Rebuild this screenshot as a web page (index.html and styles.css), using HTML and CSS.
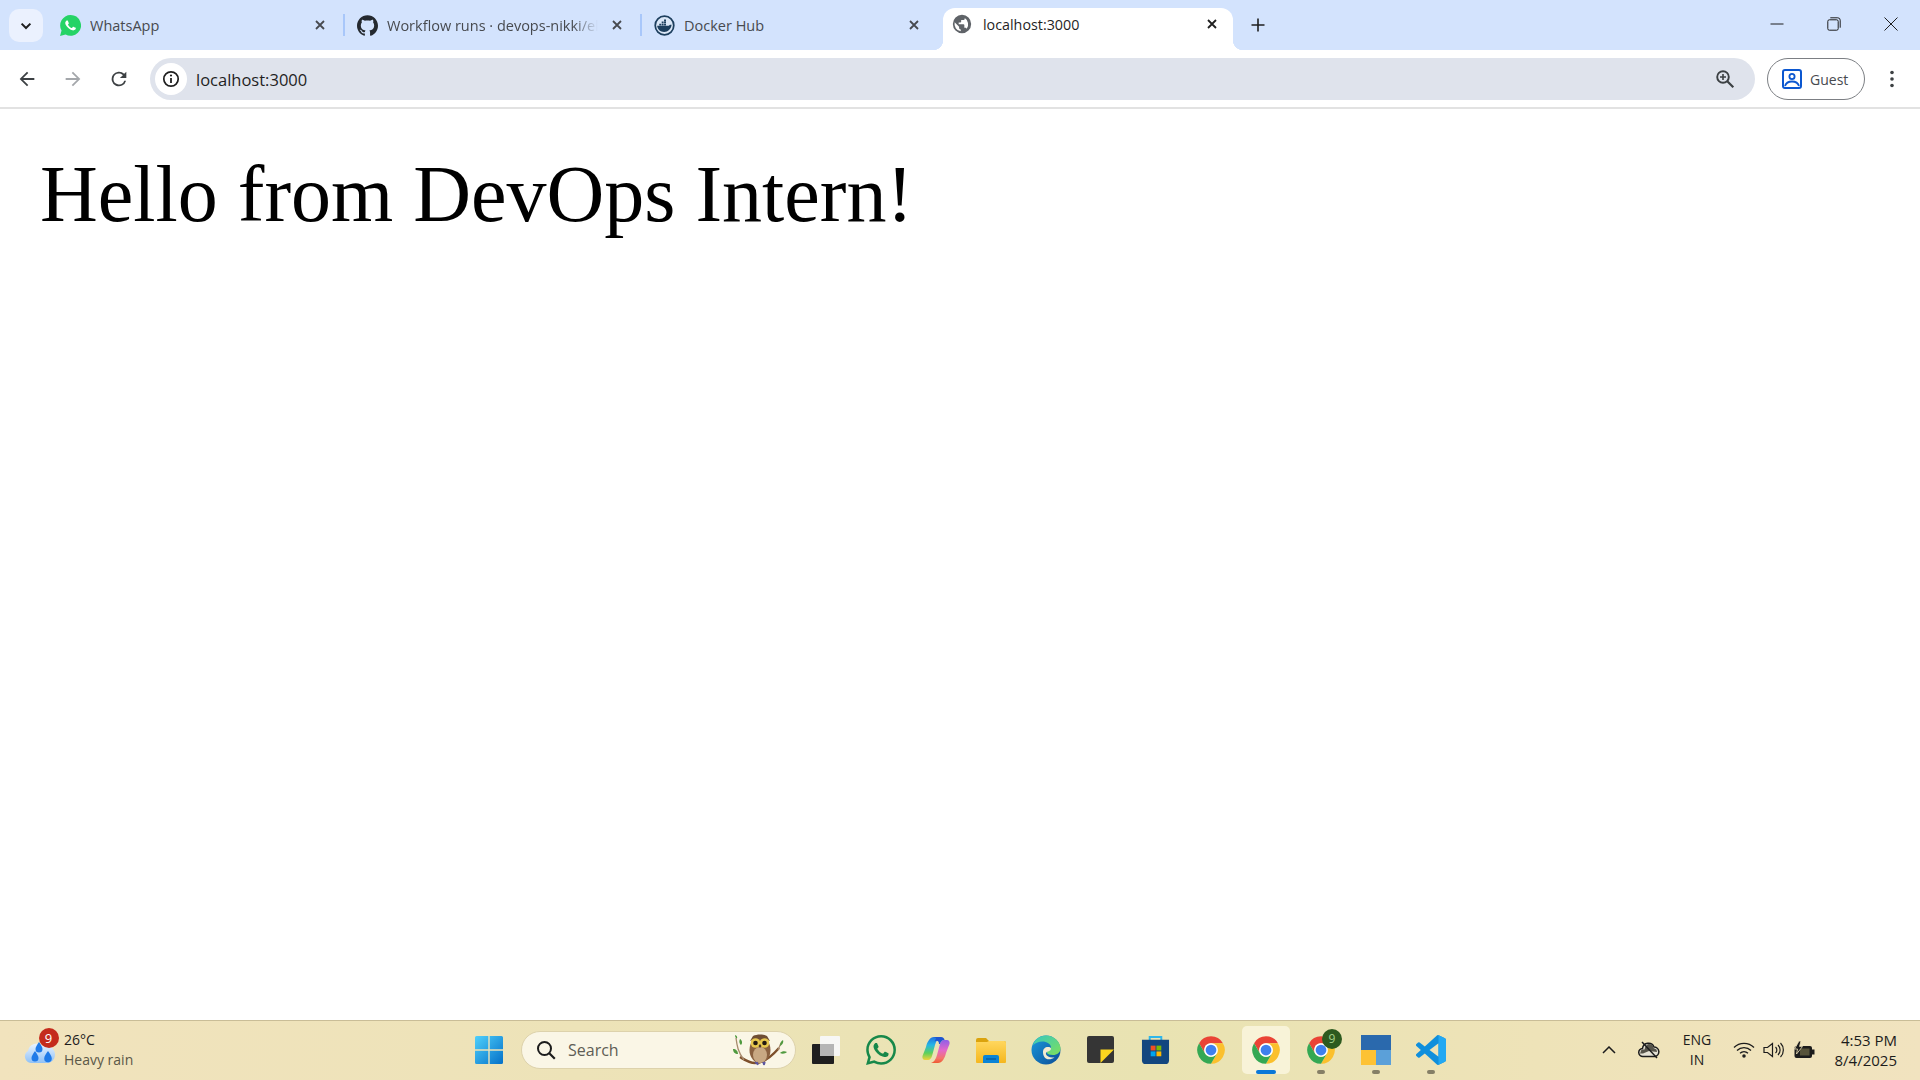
FILE: index.html
```html
<!DOCTYPE html>
<html lang="en">
<head>
<meta charset="utf-8">
<title>localhost:3000</title>
<link rel="stylesheet" href="styles.css">
</head>
<body>
<svg class="defs" width="0" height="0" aria-hidden="true">
  <defs>
    <linearGradient id="win" x1="0" y1="0" x2="1" y2="1"><stop offset="0" stop-color="#4fd0fb"/><stop offset="1" stop-color="#0470c8"/></linearGradient>
    <linearGradient id="edge1" x1="0" y1="0" x2="1" y2="1"><stop offset="0" stop-color="#36c8c0"/><stop offset="1" stop-color="#7fe05a"/></linearGradient>
    <linearGradient id="edge2" x1="0" y1="0" x2="1" y2="1"><stop offset="0" stop-color="#1a9ade"/><stop offset="1" stop-color="#0c4d96"/></linearGradient>
    <linearGradient id="fold" x1="0" y1="0" x2="0" y2="1"><stop offset="0" stop-color="#ffd75e"/><stop offset="1" stop-color="#f5b71e"/></linearGradient>
    <linearGradient id="cop" x1="0" y1="0" x2="0" y2="1"><stop offset="0" stop-color="#1f6fe0"/><stop offset=".35" stop-color="#25b6e6"/><stop offset=".7" stop-color="#5fd05a"/><stop offset="1" stop-color="#f2d23a"/></linearGradient>
    <linearGradient id="cop2" x1="0" y1="0" x2="0" y2="1"><stop offset="0" stop-color="#8f5fe8"/><stop offset=".45" stop-color="#e468c8"/><stop offset=".8" stop-color="#f4756a"/><stop offset="1" stop-color="#ef5a30"/></linearGradient>
    <linearGradient id="cloud" x1="0" y1="0" x2="0" y2="1"><stop offset="0" stop-color="#eaf3fe"/><stop offset="1" stop-color="#8fc1f6"/></linearGradient>
    <symbol id="chrome" viewBox="0 0 24 24">
      <path fill="#ea4335" d="M2.47 6.5A11 11 0 0 1 21.53 6.5H12A5.5 5.5 0 0 0 7.24 14.75Z"/>
      <path fill="#fbc02d" d="M21.53 6.5A11 11 0 0 1 12 23L16.76 14.75A5.5 5.5 0 0 0 12 6.5Z"/>
      <path fill="#34a853" d="M12 23A11 11 0 0 1 2.47 6.5L7.24 14.75A5.5 5.5 0 0 0 16.76 14.75Z"/>
      <circle cx="12" cy="12" r="5.4" fill="#fff"/>
      <circle cx="12" cy="12" r="4.3" fill="#3f80ee"/>
    </symbol>
    <symbol id="wa" viewBox="0 0 24 24">
      <path d="M17.472 14.382c-.297-.149-1.758-.867-2.03-.967-.273-.099-.471-.148-.67.15-.197.297-.767.966-.94 1.164-.173.199-.347.223-.644.075-.297-.15-1.255-.463-2.39-1.475-.883-.788-1.48-1.761-1.653-2.059-.173-.297-.018-.458.13-.606.134-.133.298-.347.446-.52.149-.174.198-.298.298-.497.099-.198.05-.371-.025-.52-.075-.149-.669-1.612-.916-2.207-.242-.579-.487-.5-.669-.51-.173-.008-.371-.01-.57-.01-.198 0-.52.074-.792.372-.272.297-1.04 1.016-1.04 2.479 0 1.462 1.065 2.875 1.213 3.074.149.198 2.096 3.2 5.077 4.487.709.306 1.262.489 1.694.625.712.227 1.36.195 1.871.118.571-.085 1.758-.719 2.006-1.413.248-.694.248-1.289.173-1.413-.074-.124-.272-.198-.57-.347m-5.421 7.403h-.004a9.87 9.87 0 01-5.031-1.378l-.361-.214-3.741.982.998-3.648-.235-.374a9.86 9.86 0 01-1.51-5.26c.001-5.45 4.436-9.884 9.888-9.884 2.64 0 5.122 1.03 6.988 2.898a9.825 9.825 0 012.893 6.994c-.003 5.45-4.437 9.884-9.885 9.884m8.413-18.297A11.815 11.815 0 0012.05 0C5.495 0 .16 5.335.157 11.892c0 2.096.547 4.142 1.588 5.945L.057 24l6.305-1.654a11.882 11.882 0 005.683 1.448h.005c6.554 0 11.89-5.335 11.893-11.893a11.821 11.821 0 00-3.48-8.413Z"/>
    </symbol>
  </defs>
</svg>

<div class="window">
  <header class="tabstrip">
    <button class="tabsearch" type="button" aria-label="Search tabs">
      <svg viewBox="0 0 12 12" width="12" height="12"><path d="M1.6 3.6 6 8l4.4-4.4" fill="none" stroke="#1f1f1f" stroke-width="2"/></svg>
    </button>
    <div class="tab">
      <svg class="favicon" viewBox="0 0 24 24">
        <path fill="#25d366" d="M.06 24l1.69-6.16A11.9 11.9 0 0 1 12.05 0a11.9 11.9 0 0 1 8.41 20.3 11.9 11.9 0 0 1-14.1 2.05Z"/>
        <path fill="#fff" d="M17.472 14.382c-.297-.149-1.758-.867-2.03-.967-.273-.099-.471-.148-.67.15-.197.297-.767.966-.94 1.164-.173.199-.347.223-.644.075-.297-.15-1.255-.463-2.39-1.475-.883-.788-1.48-1.761-1.653-2.059-.173-.297-.018-.458.13-.606.134-.133.298-.347.446-.52.149-.174.198-.298.298-.497.099-.198.05-.371-.025-.52-.075-.149-.669-1.612-.916-2.207-.242-.579-.487-.5-.669-.51-.173-.008-.371-.01-.57-.01-.198 0-.52.074-.792.372-.272.297-1.04 1.016-1.04 2.479 0 1.462 1.065 2.875 1.213 3.074.149.198 2.096 3.2 5.077 4.487.709.306 1.262.489 1.694.625.712.227 1.36.195 1.871.118.571-.085 1.758-.719 2.006-1.413.248-.694.248-1.289.173-1.413-.074-.124-.272-.198-.57-.347"/>
      </svg>
      <span class="tab-title">WhatsApp</span>
      <svg class="tab-close" viewBox="0 0 12 12"><path d="M2 2l8 8M10 2l-8 8"/></svg>
    </div>
    <span class="sep"></span>
    <div class="tab">
      <svg class="favicon" viewBox="0 0 24 24"><path fill="#24292f" d="M12 .297c-6.63 0-12 5.373-12 12 0 5.303 3.438 9.8 8.205 11.385.6.113.82-.258.82-.577 0-.285-.01-1.04-.015-2.04-3.338.724-4.042-1.61-4.042-1.61C4.422 18.07 3.633 17.7 3.633 17.7c-1.087-.744.084-.729.084-.729 1.205.084 1.838 1.236 1.838 1.236 1.07 1.835 2.809 1.49 3.495 1.14.108-.776.417-1.305.76-1.605-2.665-.3-5.466-1.332-5.466-5.93 0-1.31.465-2.38 1.235-3.22-.135-.303-.54-1.523.105-3.176 0 0 1.005-.322 3.3 1.23.96-.267 1.98-.399 3-.405 1.02.006 2.04.138 3 .405 2.28-1.552 3.285-1.23 3.285-1.23.645 1.653.24 2.873.12 3.176.765.84 1.23 1.91 1.23 3.22 0 4.61-2.805 5.625-5.475 5.92.42.36.81 1.096.81 2.22 0 1.606-.015 2.896-.015 3.286 0 .315.21.69.825.57C20.565 22.092 24 17.592 24 12.297c0-6.627-5.373-12-12-12"/></svg>
      <span class="tab-title tab-title-fade">Workflow runs · devops-nikki/el</span>
      <svg class="tab-close" viewBox="0 0 12 12"><path d="M2 2l8 8M10 2l-8 8"/></svg>
    </div>
    <span class="sep"></span>
    <div class="tab">
      <svg class="favicon" viewBox="0 0 24 24">
        <circle cx="12" cy="12" r="10.6" fill="#dbe7f7" stroke="#1d3f5e" stroke-width="2"/>
        <path fill="#1d3f5e" d="M3.6 12.4h13.3c.6-1.1 1.9-1.6 3.2-1.2-.4 4.500-4 8.300-8.500 8.300-4.300 0-7.600-3-8-7.100Z"/>
        <path fill="#1d3f5e" d="M6 10h2.200v2H6zM8.800 10H11v2H8.800zM11.500 10h2.200v2h-2.200zM8.800 7.500H11v2H8.800zM11.500 7.500h2.200v2h-2.200zM11.500 5h2.200v2h-2.200z"/>
      </svg>
      <span class="tab-title">Docker Hub</span>
      <svg class="tab-close" viewBox="0 0 12 12"><path d="M2 2l8 8M10 2l-8 8"/></svg>
    </div>
    <div class="tab tab-active">
      <svg class="favicon favicon-globe" viewBox="0 0 24 24"><path fill="#5f6368" d="M12 1a11 11 0 1 0 0 22 11 11 0 0 0 0-22Zm-1.500 19.800A9 9 0 0 1 3.200 10l5.300 5.300v1.200c0 1.100.9 2 2 2Zm7.300-2.800c-.3-.9-1.100-1.500-2-1.500h-1v-3.200c0-.6-.5-1-1-1H8v-2h2c.6 0 1-.5 1-1v-2h2.300c1.100 0 2-.9 2-2v-.4a9 9 0 0 1 2.500 12.600Z"/></svg>
      <span class="tab-title tab-title-active">localhost:3000</span>
      <svg class="tab-close tab-close-active" viewBox="0 0 12 12"><path d="M2 2l8 8M10 2l-8 8"/></svg>
    </div>
    <svg class="newtab" viewBox="0 0 14 14"><path d="M7 .5v13M.5 7h13"/></svg>
    <div class="winctl">
      <svg class="winbtn" viewBox="0 0 14 14"><path d="M.5 7h13"/></svg>
      <svg class="winbtn" viewBox="0 0 14 14"><rect x=".8" y="2.800" width="10.400" height="10.400" rx="1.500"/><path d="M3.300.8h7.500a2.400 2.400 0 0 1 2.400 2.400v7.500"/></svg>
      <svg class="winbtn" viewBox="0 0 14 14"><path d="M.5.5l13 13M13.500.5l-13 13"/></svg>
    </div>
  </header>

  <nav class="toolbar">
    <svg class="navicon" viewBox="0 0 24 24"><path fill="#3c4043" d="M20 11H7.800l5.600-5.600L12 4l-8 8 8 8 1.400-1.400L7.800 13H20z"/></svg>
    <svg class="navicon" viewBox="0 0 24 24"><path fill="#a4a7ab" d="M4 11h12.200l-5.600-5.600L12 4l8 8-8 8-1.400-1.400 5.600-5.600H4z"/></svg>
    <svg class="navicon" viewBox="0 0 24 24"><path fill="#3c4043" d="M17.650 6.350A8 8 0 1 0 19.730 14h-2.080A6 6 0 1 1 12 6c1.660 0 3.140.69 4.220 1.780L13 11h7V4z"/></svg>
    <div class="omnibox">
      <span class="infochip">
        <svg viewBox="0 0 18 18" width="18" height="18"><circle cx="9" cy="9" r="7.200" fill="none" stroke="#1f1f1f" stroke-width="1.700"/><path d="M9 8v5" stroke="#1f1f1f" stroke-width="1.800"/><circle cx="9" cy="5.500" r="1.100" fill="#1f1f1f"/></svg>
      </span>
      <span class="url">localhost:3000</span>
      <svg class="zoomicon" viewBox="0 0 20 20" width="20" height="20"><circle cx="8" cy="8" r="5.800" fill="none" stroke="#3c4043" stroke-width="1.900"/><path d="M8 5v6M5 8h6" stroke="#3c4043" stroke-width="1.600"/><path d="M12.300 12.300l6 6" stroke="#3c4043" stroke-width="2.200"/></svg>
    </div>
    <div class="guest">
      <svg viewBox="0 0 20 20" width="20" height="20"><rect x="1" y="1" width="18" height="18" rx="2" fill="none" stroke="#0b57d0" stroke-width="2"/><circle cx="10" cy="7.500" r="2.600" fill="none" stroke="#0b57d0" stroke-width="1.800"/><path d="M3 17c1-3.300 3.600-4.500 7-4.500s6 1.200 7 4.500" fill="none" stroke="#0b57d0" stroke-width="1.800"/></svg>
      <span>Guest</span>
    </div>
    <svg class="kebab" viewBox="0 0 4 18" width="4" height="18"><circle cx="2" cy="2.500" r="1.800"/><circle cx="2" cy="9" r="1.800"/><circle cx="2" cy="15.500" r="1.800"/></svg>
  </nav>

  <main class="page">
    <h1 class="hello">Hello from DevOps Intern!</h1>
  </main>

  <footer class="taskbar">
    <div class="weather">
      <div class="weather-icon">
        <svg viewBox="0 0 36 34" width="36" height="34">
          <path fill="url(#cloud)" d="M11 30A6.500 6.500 0 0 1 8 18A9 9 0 0 1 23 13A9 9 0 0 1 29 30Z"/>
          <path fill="#1f7ae8" d="M19 9c2 3 3.500 5 3.500 7a3.500 3.500 0 0 1-7 0c0-2 1.500-4 3.500-7ZM15 18c2 3 3.500 5 3.500 7a3.500 3.500 0 0 1-7 0c0-2 1.500-4 3.500-7ZM28 18c2 3 3.800 5 3.800 7.500a3.800 3.800 0 0 1-7.600 0c0-2.500 1.800-4.500 3.800-7.500Z"/>
        </svg>
        <span class="weather-badge">9</span>
      </div>
      <div class="weather-text">
        <span class="temp">26°C</span>
        <span class="cond">Heavy rain</span>
      </div>
    </div>

    <div class="slot">
      <svg viewBox="0 0 30 30" width="30" height="30"><path fill="url(#win)" d="M1 2.500A1.500 1.500 0 0 1 2.500 1h11.800v13.300H1ZM15.700 1h11.800A1.500 1.500 0 0 1 29 2.500v11.800H15.700ZM1 15.700h13.300V29H2.500A1.500 1.500 0 0 1 1 27.500ZM15.700 15.700H29v11.800a1.500 1.500 0 0 1-1.500 1.500H15.700Z"/></svg>
    </div>

    <div class="search">
      <svg viewBox="0 0 20 20" width="20" height="20"><circle cx="8.500" cy="8.500" r="6.500" fill="none" stroke="#1c1c1c" stroke-width="2"/><path d="M13.300 13.300l5.500 5.500" stroke="#1c1c1c" stroke-width="2.200"/></svg>
      <span class="search-label">Search</span>
      <svg class="owl" viewBox="0 0 56 36" width="56" height="36">
        <path d="M8 25c5 3 9 6 15 6 9 0 17-7 24-15" fill="none" stroke="#7d4f2a" stroke-width="2.400"/>
        <path d="M4 6c1 8 2 14 8 22M46 18l3-7" fill="none" stroke="#a78a6c" stroke-width="1.300"/>
        <path fill="#4f9a3f" d="M1 17c3 0 5 2 5 5-3 0-5-2-5-5ZM8 7c2 1 3 4 1 6-2-2-2-4-1-6ZM51 8c1 3-1 5-3 6 0-3 1-5 3-6ZM55 20c-2 2-5 2-7 1 2-2 5-2 7-1ZM3 3c2 .5 2.500 2 2 3.500C3.500 6 3 4.500 3 3Z"/>
        <ellipse cx="28" cy="18" rx="10.500" ry="13" fill="#8a6140"/>
        <ellipse cx="28" cy="23" rx="7" ry="8" fill="#c8a883"/>
        <path d="M18 9l3-5c4-2 10-2 14 0l3 5c-5-2-15-2-20 0Z" fill="#6f4e34"/>
        <circle cx="23.500" cy="11" r="4.800" fill="#e8c84e"/>
        <circle cx="32.500" cy="11" r="4.800" fill="#e8c84e"/>
        <circle cx="23.500" cy="11" r="2.300" fill="#231a12"/>
        <circle cx="32.500" cy="11" r="2.300" fill="#231a12"/>
        <path d="M28 12l-1.500 2 1.500 2 1.500-2Z" fill="#4a3626"/>
        <path d="M23 30l2 2M25 30l1 3M31 30l1 3M33 30l-1 3" stroke="#5a55a0" stroke-width="1.500"/>
      </svg>
    </div>

    <div class="apps">
      <div class="slot">
        <svg viewBox="0 0 30 30" width="30" height="30">
          <rect x="9" y="1" width="20" height="20" rx="1" fill="#f7f7f5"/>
          <rect x="1" y="9" width="22" height="20" rx="1" fill="#1f1f1f"/>
          <path d="M9 9h14v12H9Z" fill="#b5b5b5"/>
        </svg>
      </div>
      <div class="slot">
        <svg class="wa-task" viewBox="0 0 24 24" width="30" height="30"><use href="#wa"/></svg>
      </div>
      <div class="slot">
        <svg viewBox="0 0 30 30" width="30" height="30">
          <path fill="url(#cop)" d="M5 12C6 7 9 2 13 2H20C17 3 15 6 14 10L11 21C10.500 23 9 25 7 25H4C2 25 1 23 1.500 21Z"/>
          <path fill="url(#cop2)" d="M25 18C24 23 21 28 17 28H10C13 27 15 24 16 20L19 9C19.500 7 21 5 23 5H26C28 5 29 7 28.500 9Z"/>
          <path fill="#1f55d0" d="M13 2H20C22 2 23.500 3.500 23.500 5H23C21 5 19.500 7 19 9L18 9C18 6 16 5 13.500 6.500 15 3.500 16 3 13 2Z"/>
        </svg>
      </div>
      <div class="slot">
        <svg viewBox="0 0 30 30" width="30" height="30">
          <path fill="#dba30d" d="M0 5a2 2 0 0 1 2-2h8l3 3h15a2 2 0 0 1 2 2v3H0Z"/>
          <path fill="url(#fold)" d="M0 7h11l2-1h15a2 2 0 0 1 2 2v19a1 1 0 0 1-1 1H1a1 1 0 0 1-1-1Z"/>
          <path fill="#0a84d6" d="M7 22a2 2 0 0 1 2-2h12a2 2 0 0 1 2 2v6H7Z"/>
          <path stroke="#075a9c" stroke-width="1.300" d="M10 24h10"/>
        </svg>
      </div>
      <div class="slot">
        <svg viewBox="0 0 30 30" width="30" height="30">
          <circle cx="15" cy="15" r="14.500" fill="url(#edge2)"/>
          <path fill="url(#edge1)" d="M2 10C4 4 9 .5 15 .5c8 0 14.500 6.500 14.500 13 0 4-3.500 6.500-7.500 6.500-3 0-5.500-1-6-2-.5-.8 0-1.500 1-2 1.500-.8 3-1 3-3.500 0-3.500-4.500-6-8.500-6S5 8 2 10Z"/>
          <path fill="#f3ead0" d="M12 17c0-3 2-5 5-5 1.500 0 2.500.5 3 1.300.2 1.700-1 2.700-3 3.200-1.500.4-2.500 1.300-2 2.700.8 2.500 4.500 3.800 8.500 3-2 1.800-5 2.500-7 2-3-.7-4.500-4-4.500-7.200Z"/>
        </svg>
      </div>
      <div class="slot">
        <svg viewBox="0 0 28 28" width="27" height="27">
          <rect width="28" height="28" rx="2" fill="#353535"/>
          <path fill="#fbd51f" d="M14 14H28L14 28Z"/>
        </svg>
      </div>
      <div class="slot">
        <svg viewBox="0 0 30 32" width="29" height="31">
          <path d="M9 7V3h12v4" fill="none" stroke="#2fb6ea" stroke-width="2"/>
          <path fill="#12467f" d="M1 6h28v21a4 4 0 0 1-4 4H5a4 4 0 0 1-4-4Z"/>
          <rect x="10" y="12" width="5" height="5" fill="#f25022"/>
          <rect x="16" y="12" width="5" height="5" fill="#7fba00"/>
          <rect x="10" y="18" width="5" height="5" fill="#00a4ef"/>
          <rect x="16" y="18" width="5" height="5" fill="#ffb900"/>
        </svg>
      </div>
      <div class="slot">
        <svg width="30" height="30"><use href="#chrome"/></svg>
      </div>
      <div class="slot slot-active">
        <svg width="30" height="30"><use href="#chrome"/></svg>
        <span class="pip pip-active"></span>
      </div>
      <div class="slot">
        <svg width="30" height="30"><use href="#chrome"/></svg>
        <span class="chrome-badge">9</span>
        <span class="pip"></span>
      </div>
      <div class="slot">
        <svg viewBox="0 0 30 30" width="30" height="30">
          <rect width="30" height="15" fill="#2a69ad"/>
          <rect y="15" width="15" height="15" fill="#fdc234"/>
          <rect x="15" y="15" width="15" height="15" fill="#5ba0d9"/>
        </svg>
        <span class="pip"></span>
      </div>
      <div class="slot">
        <svg viewBox="0 0 24 24" width="30" height="30"><path fill="#0f8fdc" d="M23.150 2.587L18.210.21a1.494 1.494 0 0 0-1.705.29l-9.460 8.630-4.120-3.128a.999.999 0 0 0-1.276.057L.327 7.261A1 1 0 0 0 .326 8.740L3.899 12 .326 15.260a1 1 0 0 0 .001 1.479L1.650 17.940a.999.999 0 0 0 1.276.057l4.120-3.128 9.460 8.630a1.492 1.492 0 0 0 1.704.29l4.942-2.377A1.500 1.500 0 0 0 24 20.060V3.939a1.500 1.500 0 0 0-.85-1.352zm-5.146 14.861L10.826 12l7.178-5.448v10.896z"/><path fill="#23a8f2" d="M18 0.150l5.150 2.437A1.500 1.500 0 0 1 24 3.939V20.060a1.500 1.500 0 0 1-.85 1.353L18 23.850V17.450z"/></svg>
        <span class="pip"></span>
      </div>
    </div>

    <div class="tray">
      <span class="tray-slot tray-chevron">
        <svg viewBox="0 0 14 8" width="14" height="8"><path d="M1 7l6-6 6 6" fill="none" stroke="#1c1c1c" stroke-width="1.500"/></svg>
      </span>
      <span class="tray-slot tray-cloud">
        <svg viewBox="0 0 22 18" width="22" height="18"><path d="M5 15.500a4 4 0 0 1-.5-8A6 6 0 0 1 16 6a4.800 4.800 0 0 1 1 9.500Z" fill="#e4e1d4" stroke="#1c1c1c" stroke-width="1.500"/><path d="M3.500 8.500h3C7 5 9.500 3 11 3c2.500 0 4.500 1.500 4.500 4l3 1.500.5 2.500-8-1-6 2.500H2Z" fill="#55534a"/><path d="M4 1l15 16" stroke="#1c1c1c" stroke-width="1.500"/></svg>
      </span>
      <span class="lang"><span>ENG</span><span>IN</span></span>
      <span class="tray-slot tray-small">
        <svg viewBox="0 0 22 16" width="22" height="16" fill="none" stroke="#1c1c1c" stroke-width="1.300"><path d="M1 5.500a14 14 0 0 1 20 0M4 8.500a10 10 0 0 1 14 0M7 11.300a6 6 0 0 1 8 0"/><circle cx="11" cy="14" r="1.100" fill="#1c1c1c"/></svg>
      </span>
      <span class="tray-slot tray-small">
        <svg viewBox="0 0 22 16" width="22" height="16" fill="none" stroke="#1c1c1c" stroke-width="1.200"><path d="M1 5.500h3.500L9.500 1.500v13L4.500 10.500H1Z"/><path d="M12.500 5a4 4 0 0 1 0 6M15 3a7 7 0 0 1 0 10M17.500 1a10 10 0 0 1 0 14"/></svg>
      </span>
      <span class="tray-slot tray-small">
        <svg viewBox="0 0 22 18" width="22" height="18"><rect x="1.500" y="5" width="17.500" height="12" rx="2" fill="#1c1c1c"/><rect x="19" y="8.500" width="2.500" height="5" fill="#1c1c1c"/><rect x="7" y="7.500" width="9.500" height="7" fill="#57533a"/><path d="M6 0 1.500 8h3L3.500 13 9.500 5.500H6.500l1.500-5.500Z" fill="#1c1c1c" stroke="#f0e3bc" stroke-width=".8"/></svg>
      </span>
      <span class="clock"><span>4:53 PM</span><span>8/4/2025</span></span>
    </div>
  </footer>
</div>
</body>
</html>
```
FILE: styles.css
```css
* { box-sizing: border-box; }
html, body { margin: 0; height: 100%; }
body { font-family: "Open Sans", "Noto Sans", sans-serif; background: #fff; overflow: hidden; }
.defs { position: absolute; }
.window { height: 1080px; display: flex; flex-direction: column; }

/* tab strip */
.tabstrip { height: 50px; flex: none; background: #d3e3fd; display: flex; align-items: flex-end; padding-left: 9px; }
.tabsearch { width: 34px; height: 33px; margin: 0 5px 8px 0; flex: none; border: 0; padding: 0; border-radius: 10px; background: #ebf1fe; display: flex; align-items: center; justify-content: center; }
.tab { width: 295px; height: 41px; flex: none; display: flex; align-items: center; padding: 0 13px 9px 12px; gap: 9px; }
.favicon { width: 21px; height: 21px; flex: none; }
.favicon-globe { width: 20px; height: 20px; }
.tab-title { flex: 1; min-width: 0; overflow: hidden; white-space: nowrap; font-size: 14.500px; color: #474a4f; }
.tab-title-fade { -webkit-mask-image: linear-gradient(to right, #000 88%, transparent 100%); mask-image: linear-gradient(to right, #000 88%, transparent 100%); }
.tab-title-active { color: #1f1f1f; font-size: 14.300px; }
.tab-close { width: 12px; height: 12px; flex: none; margin: 0 4px; fill: none; stroke: #474a4f; stroke-width: 1.800; }
.tab-close-active { stroke: #1f1f1f; }
.sep { width: 2px; height: 22px; margin-bottom: 14px; flex: none; background: #a8c7fa; }
.tab-active { position: relative; width: 290px; height: 42px; margin-left: 6px; gap: 11px; padding: 0 11px 10px 9px; background: #fff; border-radius: 12px 12px 0 0; }
.tab-active::before, .tab-active::after { content: ""; position: absolute; bottom: 0; width: 10px; height: 10px; }
.tab-active::before { left: -10px; background: radial-gradient(circle at 0 0, transparent 10px, #fff 10.500px); }
.tab-active::after { right: -10px; background: radial-gradient(circle at 100% 0, transparent 10px, #fff 10.500px); }
.newtab { width: 14px; height: 14px; margin: 0 0 18px 18px; flex: none; fill: none; stroke: #1f1f1f; stroke-width: 1.600; }
.winctl { margin-left: auto; display: flex; align-items: center; gap: 43px; padding: 0 22px 0 0; align-self: center; margin-top: -2px; }
.winbtn { width: 14px; height: 14px; fill: none; stroke: #1f1f1f; stroke-width: 1; }

/* toolbar */
.toolbar { height: 59px; flex: none; background: #fff; border-bottom: 2px solid #e2e2e2; border-radius: 8px 8px 0 0; display: flex; align-items: center; padding: 1px 26px 0 16px; }
.navicon { width: 22px; height: 22px; flex: none; margin-right: 24px; }
.omnibox { width: 1605px; height: 42px; margin-left: -4px; flex: none; border-radius: 21px; background: #dfe3ec; display: flex; align-items: center; padding: 0 20px 0 5px; }
.infochip { width: 32px; height: 32px; flex: none; border-radius: 50%; background: #fff; display: flex; align-items: center; justify-content: center; }
.url { margin-left: 9px; font-size: 16.500px; color: #1f1f1f; flex: 1; }
.zoomicon { flex: none; }
.guest { width: 98px; height: 42px; margin-left: 12px; flex: none; border: 1.500px solid #7c7f84; border-radius: 21px; display: flex; align-items: center; gap: 8px; padding-left: 14px; font-size: 14px; color: #474a4f; }
.kebab { margin-left: 25px; flex: none; fill: #3c4043; }

/* page */
.page { flex: 1; min-height: 0; padding: 39px 40px 0; background: #fff; }
.hello { margin: 0; font-family: "Liberation Serif", serif; font-size: 80px; font-weight: 400; line-height: 92px; color: #000; }

/* taskbar */
.taskbar { height: 60px; flex: none; display: flex; align-items: center; padding-bottom: 2px; border-top: 1px solid #c9bd97; background: linear-gradient(90deg, #f1e3bd 0%, #ede3b8 30%, #e9e3b2 60%, #eee3b8 80%, #f1e3bf 100%); }
.weather { width: 461px; flex: none; display: flex; align-items: center; padding-left: 20px; gap: 8px; }
.weather-icon { position: relative; width: 36px; height: 34px; flex: none; }
.weather-badge { position: absolute; left: 18.500px; top: -5px; width: 20px; height: 20px; border-radius: 50%; background: #c42b1c; color: #fff; font-size: 13px; line-height: 20px; text-align: center; }
.weather-text { display: flex; flex-direction: column; font-size: 14px; line-height: 20px; }
.temp { color: #1c1c1c; }
.cond { color: #5b5848; }
.slot { position: relative; width: 55px; height: 48px; flex: none; display: flex; align-items: center; justify-content: center; }
.search { width: 275px; height: 38px; margin-left: 5px; flex: none; border-radius: 19px; background: #faf6e6; border: 1px solid #ddd2ac; display: flex; align-items: center; padding: 0 7px 0 14px; }
.search-label { margin-left: 12px; font-size: 16px; color: #5e5d55; flex: 1; }
.owl { flex: none; }
.apps { display: flex; align-items: center; margin-left: 2px; }
.slot-active { width: 48px; margin: 0 3.500px; background: #f8f3d8; border-radius: 5px; }
.wa-task { fill: #17884a; }
.pip { position: absolute; left: 50%; bottom: 0; width: 8px; height: 4px; margin-left: -4px; border-radius: 2px; background: #857f66; }
.pip-active { width: 20px; margin-left: -10px; background: #0a78d8; }
.chrome-badge { position: absolute; left: 29px; top: 3px; width: 20px; height: 20px; border-radius: 50%; background: #2d5a1f; color: #a4cf8a; font-size: 12px; line-height: 20px; text-align: center; }
.tray { margin-left: auto; display: flex; align-items: center; }
.tray-slot { display: flex; align-items: center; justify-content: center; flex: none; }
.tray-chevron, .tray-cloud { width: 40px; }
.tray-small { width: 30px; }
.lang { width: 56px; margin-right: 4px; display: flex; flex-direction: column; align-items: center; font-size: 14px; line-height: 20px; color: #1c1c1c; }
.clock { width: 101px; padding-right: 23px; display: flex; flex-direction: column; align-items: flex-end; font-size: 15px; line-height: 20px; color: #1c1c1c; }
```
